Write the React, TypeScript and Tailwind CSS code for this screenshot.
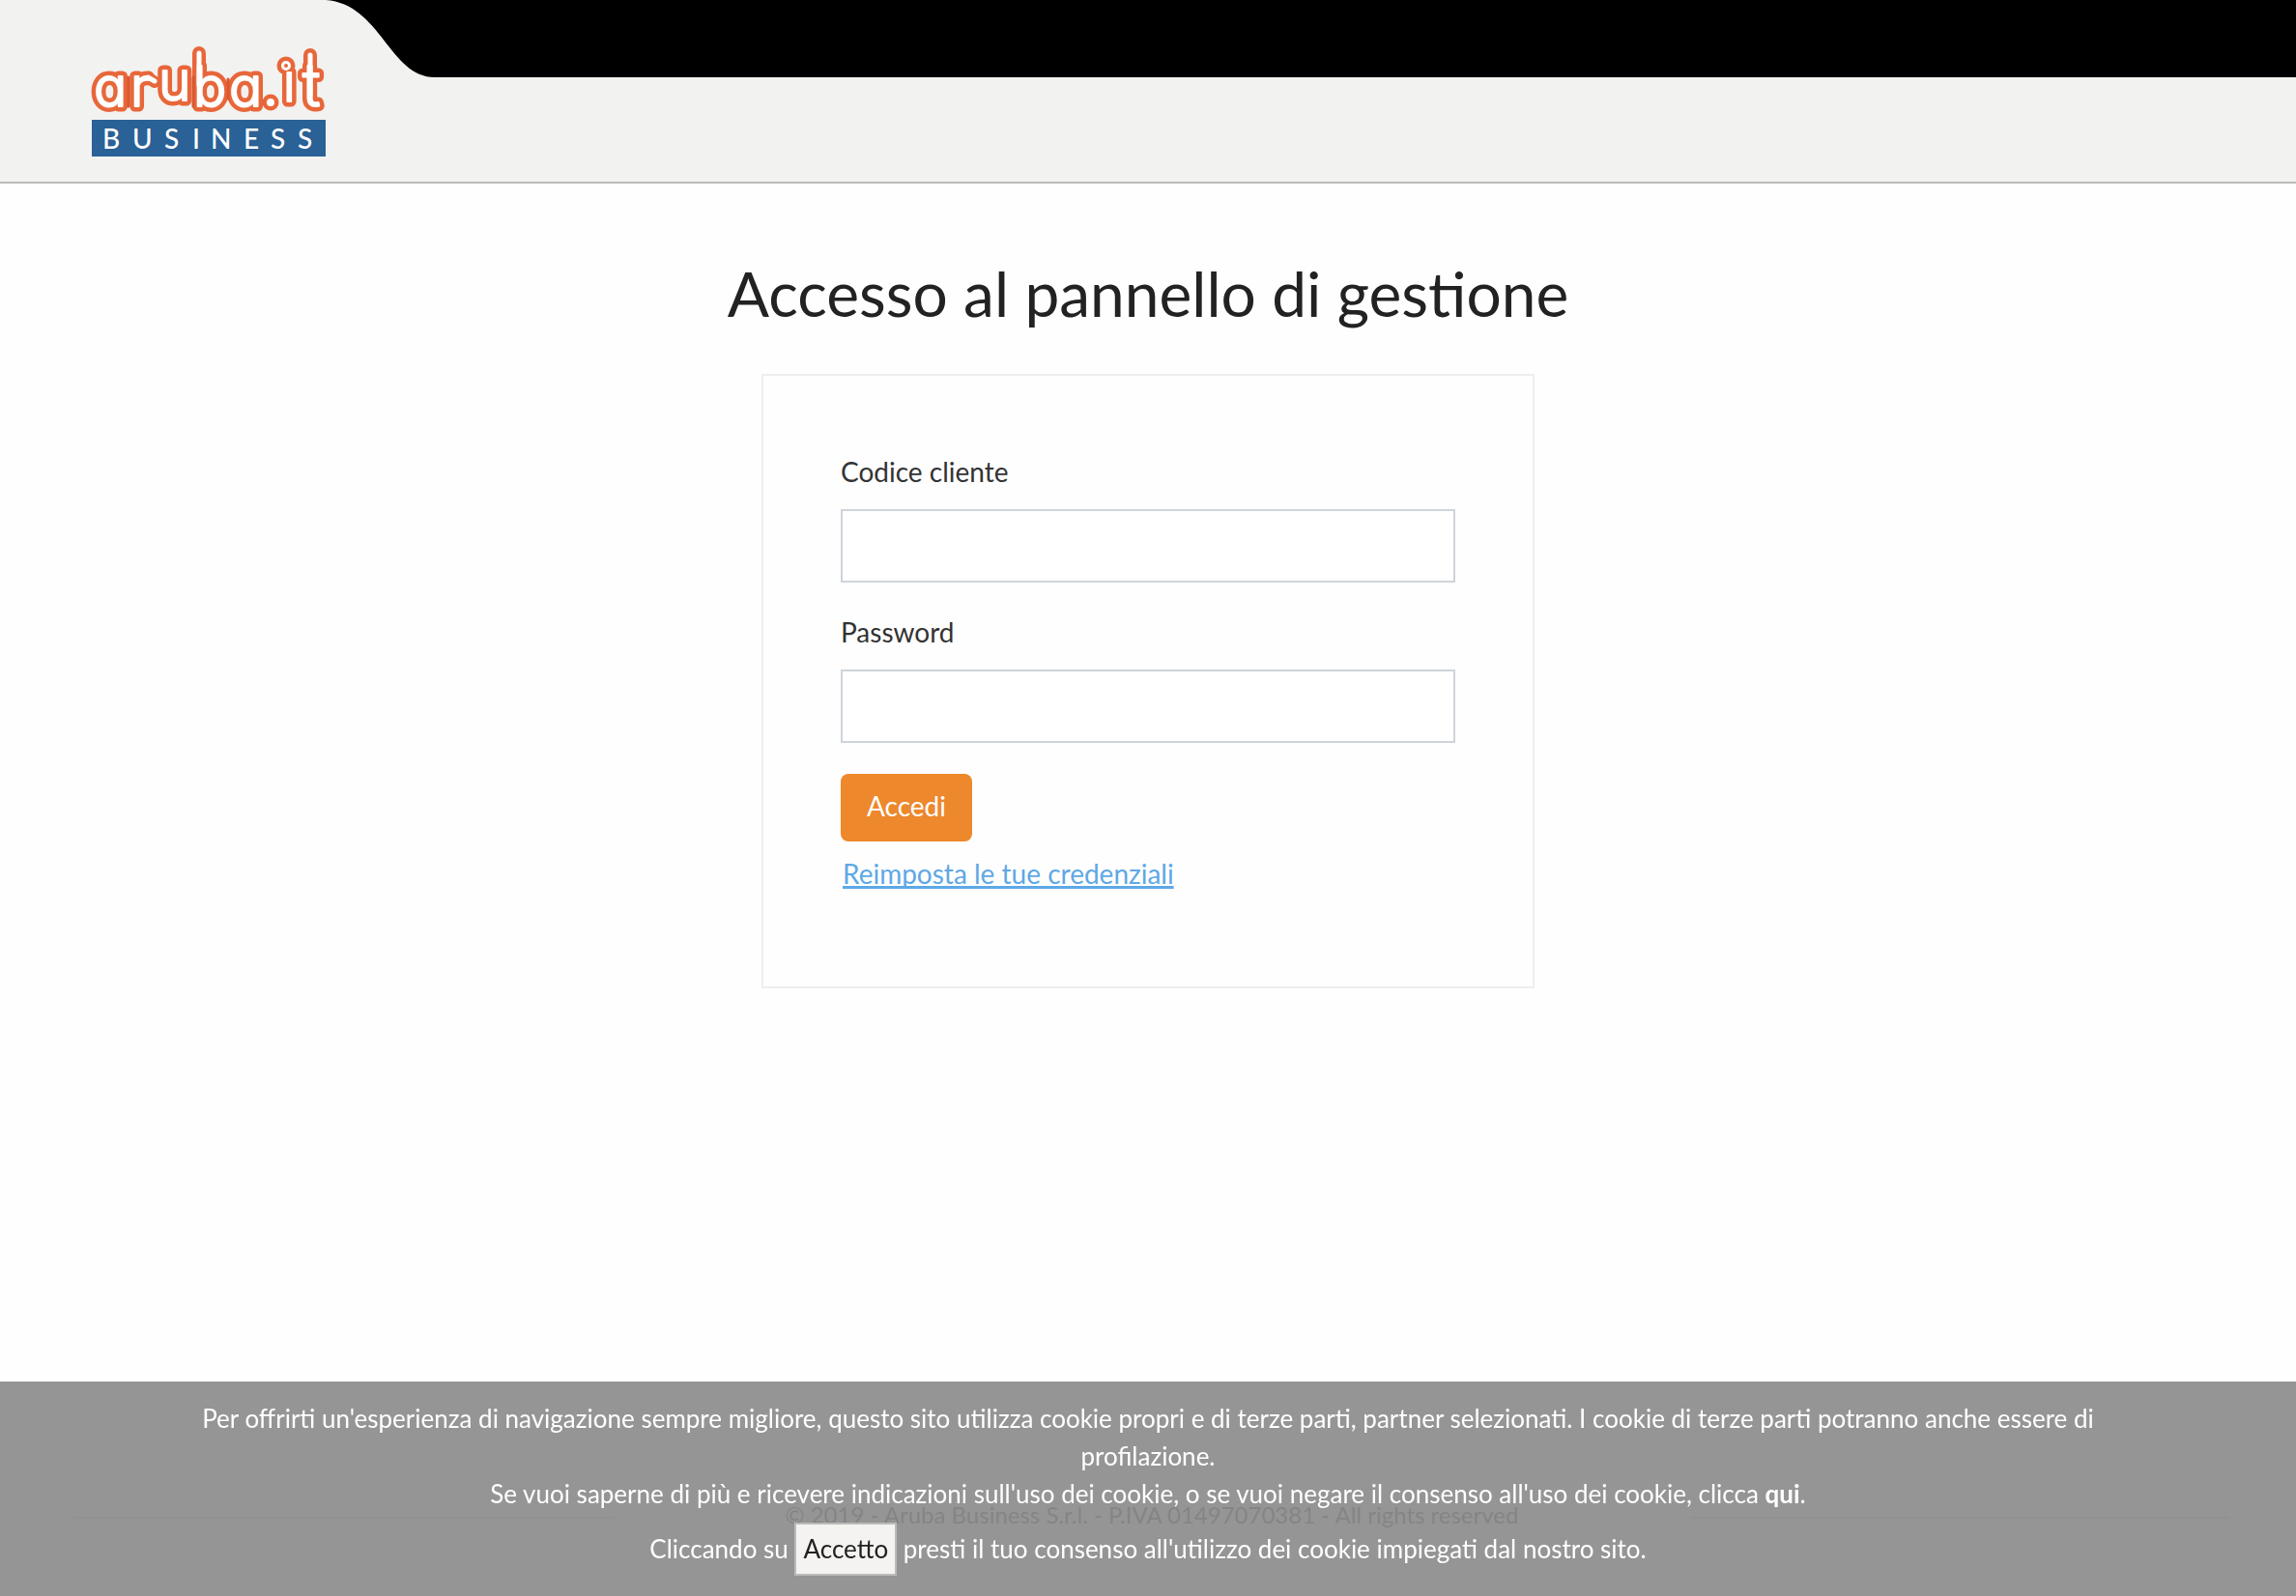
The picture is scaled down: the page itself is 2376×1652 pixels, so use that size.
const orange = "#e8673a";
const deepOrange = "#d9582f";

/* Letters of the wordmark, each with its own baseline so that they bounce a little. */
const letters = [
  { ch: "a", x: 2, y: 62, size: 57 },
  { ch: "r", x: 40, y: 62, size: 57 },
  { ch: "u", x: 69, y: 56, size: 57 },
  { ch: "b", x: 105, y: 62, size: 57 },
  { ch: "a", x: 142, y: 62, size: 57 },
  { ch: "ı", x: 198, y: 57, size: 54 },
  { ch: "t", x: 218, y: 62, size: 62 },
];

function Letters() {
  return (
    <>
      {letters.map((l, i) => (
        <text key={i} x={l.x} y={l.y} fontSize={l.size}>
          {l.ch}
        </text>
      ))}
    </>
  );
}

function Logo() {
  return (
    <svg viewBox="0 0 242 114" className="h-[114px] w-[242px] overflow-visible" role="img" aria-label="aruba.it business">
      <g
        fontFamily="Inter, sans-serif"
        fontWeight="300"
        strokeLinejoin="round"
        strokeLinecap="round"
        className="[font-feature-settings:'cv11']"
      >
        <g fill={orange} stroke={orange} strokeWidth="11">
          <Letters />
          <path d="M111 7V40M226 9V50" strokeWidth="14" />
          <path d="M58 32L65 37" strokeWidth="12" />
          <circle cx="185" cy="58" r="3" />
          <circle cx="201" cy="20" r="4" />
        </g>
        <path d="M38 32V62M105 32V62M141 34V54" stroke={deepOrange} strokeWidth="3" />
        <g fill="#fff" stroke="#fff" strokeWidth="2">
          <Letters />
          <path d="M111 7V40M226 9V50M58 32L65 36" strokeWidth="5" />
          <circle cx="185" cy="58" r="3" />
          <circle cx="201" cy="20" r="4" />
        </g>
        <circle cx="201" cy="20" r="2" fill={orange} />
      </g>
      <rect y="76" width="242" height="38" fill="#2a6196" />
      <text x="11 42 75 104 123 157 185 213" y="106" fill="#fff" fontFamily="Lato, sans-serif" fontSize="28" fontWeight="500">
        BUSINESS
      </text>
    </svg>
  );
}

function Field({ id, label, type }: { id: string; label: string; type: string }) {
  return (
    <div className="mb-8 flex flex-col gap-5">
      <label htmlFor={id} className="leading-[38px]">
        {label}
      </label>
      <input id={id} type={type} className="h-[76px] w-full border-2 border-[#ced4da] bg-white px-6 outline-none" />
    </div>
  );
}

export default function App() {
  return (
    <div className="flex min-h-screen flex-col bg-[#fefefe] font-[Lato,sans-serif] text-[28px] leading-[42px] text-[#333]">
      <header className="flex items-start border-b-2 border-[#bbb] bg-[#f2f2f0]">
        <div className="pt-12 pb-[26px] pl-[95px]">
          <Logo />
        </div>
        <svg viewBox="0 0 113 80" className="h-20 w-[113px] shrink-0" aria-hidden="true">
          <path d="M0 0C57 4 66 80 113 80V0Z" fill="#000" />
        </svg>
        <div className="h-20 flex-1 bg-black" />
      </header>

      <main className="flex flex-1 flex-col items-center pt-16">
        <h1 className="text-[64px] leading-[99px] text-[#222]">Accesso al pannello di gestione</h1>
        <form className="mt-[34px] w-full max-w-[800px] border-2 border-[#eee] px-20 pt-20 pb-24" onSubmit={(e) => e.preventDefault()}>
          <Field id="codice" label="Codice cliente" type="text" />
          <Field id="password" label="Password" type="password" />
          <button type="submit" className="block h-[70px] rounded-lg bg-[#ed882c] px-[27px] pb-1 text-white">
            Accedi
          </button>
          <a href="#" className="mt-3 ml-0.5 inline-block text-[#5fa8e6] underline decoration-3 [text-decoration-skip-ink:none]">
            Reimposta le tue credenziali
          </a>
        </form>
      </main>

      <footer className="flex items-center pr-[69px] pb-[60px] pl-[77px] text-[24px] leading-[36px] text-[#545454]">
        <hr className="w-1/4 border-t-2 border-[#d8d8d8]" />
        <p className="flex-1 pb-1.5 text-center">© 2019 - Aruba Business S.r.l. - P.IVA 01497070381 - All rights reserved</p>
        <hr className="w-1/4 border-t-2 border-[#d8d8d8]" />
      </footer>

      <div className="fixed inset-x-0 bottom-0 bg-[#898989]/90 px-[190px] pt-[19px] pb-[21px] text-center text-[26px] leading-[39px] text-white">
        <p>
          Per offrirti un'esperienza di navigazione sempre migliore, questo sito utilizza cookie propri e di terze parti, partner selezionati. I cookie di terze
          parti potranno anche essere di profilazione.
        </p>
        <p>
          Se vuoi saperne di più e ricevere indicazioni sull'uso dei cookie, o se vuoi negare il consenso all'uso dei cookie, clicca{" "}
          <a href="#" className="font-bold">
            qui
          </a>
          .
        </p>
        <p className="mt-2.5">
          Cliccando su{" "}
          <button type="button" className="border-2 border-[#bbb] bg-[#f4f3f1] px-[7px] py-1.5 text-[#222]">
            Accetto
          </button>{" "}
          presti il tuo consenso all'utilizzo dei cookie impiegati dal nostro sito.
        </p>
      </div>
    </div>
  );
}
